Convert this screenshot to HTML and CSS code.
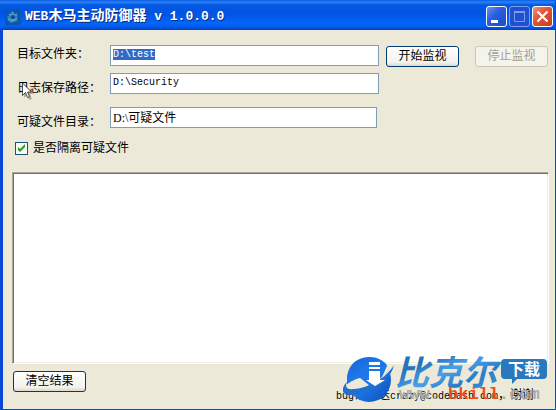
FILE: index.html
```
<!DOCTYPE html>
<html lang="zh-CN">
<head>
    <meta charset="UTF-8">
    <meta name="viewport" content="width=device-width, initial-scale=1.0">
    <title>WEB木马主动防御器</title>
    <link rel="stylesheet" href="styles.css">
</head>
<body>
    <div class="window">
        <header class="titlebar">
            <svg class="app-icon" viewBox="0 0 16 16">
                <rect width="16" height="16" fill="#0b55b5"/>
                <path d="M2 8l3-3 2-3 2 3 4 1-1 3 1 3-4 1-3 1-3-2z" fill="#2f7fbc"/>
                <path d="M4 5l4 2 4-2M3 10l5 2 4-3M8 3v9" stroke="#6cb0d0" fill="none"/>
                <circle cx="8" cy="8" r="2" fill="#0c4890"/>
            </svg>
            <h1 class="title"><span class="latin">WEB</span>木马主动防御器<span class="latin"> v 1.0.0.0</span></h1>
            <div class="window-buttons">
                <button type="button" class="win-btn" aria-label="最小化">
                    <svg viewBox="0 0 19 19"><path d="M4 13h7v3H4z" fill="#fff"/></svg>
                </button>
                <button type="button" class="win-btn win-max" aria-label="最大化" disabled>
                    <svg viewBox="0 0 19 19"><path d="M4.500 5v9.500h10V5M4 5h11" stroke="#7d9cf0" fill="none"/><path d="M4 4h11v2H4z" fill="#7d9cf0"/></svg>
                </button>
                <button type="button" class="win-btn win-close" aria-label="关闭">
                    <svg viewBox="0 0 19 19"><path d="M4.500 4.500l10 10m0-10l-10 10" stroke="#fff" stroke-width="2.200"/></svg>
                </button>
            </div>
        </header>

        <main class="content">
            <form class="settings">
                <div class="row">
                    <label for="target">目标文件夹：</label>
                    <input type="text" id="target" class="latin-input" value="D:\test" autofocus>
                    <div class="actions">
                        <button type="button" class="btn">开始监视</button>
                        <button type="button" class="btn" disabled>停止监视</button>
                    </div>
                </div>
                <div class="row row-log">
                    <label for="log">日志保存路径：</label>
                    <input type="text" id="log" class="latin-input" value="D:\Security">
                    <svg class="cursor" viewBox="0 0 12 19">
                        <path d="M2 3v13l3-3 2 5 3-1-2-5h4z" fill="#000" opacity=".25"/>
                        <path d="M.5 1v12.500l3-3 2 5 2-1-2-4.500h4z" fill="#fff" stroke="#222" stroke-width=".8"/>
                    </svg>
                </div>
                <div class="row row-suspect">
                    <label for="suspect">可疑文件目录：</label>
                    <input type="text" id="suspect" value="D:\可疑文件">
                </div>
                <label class="check"><input type="checkbox" checked>是否隔离可疑文件</label>
            </form>

            <div class="results"></div>

            <footer class="footer">
                <button type="button" class="btn btn-clear">清空结果</button>
                <p class="contact"><span class="latin">bug</span>请发送<span class="latin">crazy@codebash.com</span>，谢谢</p>
            </footer>
        </main>

        <svg class="watermark" viewBox="0 0 212 56">
            <defs>
                <linearGradient id="ball" x1="0" y1="0" x2="1" y2="1">
                    <stop offset="0" stop-color="#1263d8"/>
                    <stop offset=".5" stop-color="#1f78ea"/>
                    <stop offset="1" stop-color="#0b4db4"/>
                </linearGradient>
                <linearGradient id="word" x1="0" y1="0" x2="1" y2="1">
                    <stop offset="0" stop-color="#2474bd"/>
                    <stop offset=".3" stop-color="#2474bd"/>
                    <stop offset=".5" stop-color="#4aa0e8"/>
                    <stop offset=".7" stop-color="#2b7cc8"/>
                    <stop offset="1" stop-color="#4a9ad8"/>
                </linearGradient>
            </defs>
            <circle cx="26" cy="27" r="22" fill="url(#ball)"/>
            <path d="M4 31C14 23 28 24 34 20l11-8 3 6C40 32 24 41 5 39z" fill="#ece9d8"/>
            <path d="M4 24C6 10 15 4 27 4c7 0 13 3 17 8-4 7-12 6-20 9C16 24 9 27 4 31z" fill="url(#ball)"/>
            <path d="M16 24l8-3 17-9 3 1-5 11-12 9z" fill="#1f78ea"/>
            <path d="M5 28C-3 35-2 43 9 42c18-1 38-13 42-30C43 25 26 35 11 36c-8 1-10-3-6-8z" fill="#2170d0"/>
            <path d="M26 9h11v3H26zm0 5h11v2H26zm0 4h11v9h5L32 33l-9-6h3z" fill="#fff"/>
            <text class="brand" x="52" y="32">比克尔</text>
            <path d="M162 6h38q4 0 4 4v12q0 4-4 4h-26l-5 5v-5h-7q-4 0-4-4V10q0-4 4-4z" fill="#2879bd"/>
            <text class="brand-badge" x="165" y="22">下载</text>
            <text class="brand-url" y="46"><tspan x="56">www.</tspan><tspan class="brand-hot" x="105">bkill</tspan><tspan x="156">.com</tspan></text>
        </svg>
    </div>

    <script>
        const target = document.getElementById("target");
        target.focus();
        target.select();
    </script>
</body>
</html>
```

FILE: styles.css
```
* {
    box-sizing: border-box;
}
body {
    margin: 0;
    font-family: "Liberation Serif", "Noto Sans CJK SC", serif;
    font-size: 12px;
    line-height: 16px;
    color: #000;
    background-color: #ece9d8;
}
button, input {
    font: inherit;
    margin: 0;
}
.window {
    position: relative;
    display: flex;
    flex-direction: column;
    min-height: 100vh;
    border: solid #0a48d8;
    border-width: 0 1px 1px 3px;
}
.latin {
    font-family: "Liberation Mono", monospace;
    font-size: 10px;
    white-space: pre;
}

/* 标题栏 */
.titlebar {
    display: flex;
    align-items: center;
    height: 30px;
    margin-left: -3px;
    padding: 3px 2px 0 5px;
    background: linear-gradient(#0a5ce0 0, #2a82fa 2px, #0458e0 5px, #0054e3 14px, #0566fb 24px, #0359ea 27px, #0340c4 30px);
}
.app-icon {
    width: 16px;
    height: 16px;
    margin-right: 4px;
}
.title {
    flex: 1;
    margin: 0;
    font-size: 14px;
    line-height: 20px;
    color: #fff;
    text-shadow: 1px 1px #0a2a80;
}
.title .latin {
    font-size: 13px;
}
.window-buttons {
    display: flex;
    gap: 2px;
}
.win-btn {
    width: 21px;
    height: 21px;
    padding: 0;
    border: 1px solid #fff;
    border-radius: 3px;
    background: linear-gradient(135deg, #6a94f0, #2a5fe0 40%, #1b4cc8);
}
.win-btn svg {
    display: block;
    width: 19px;
    height: 19px;
}
.win-max {
    border-color: #7d9cf0;
    background: #1f50d0;
}
.win-close {
    background: linear-gradient(135deg, #f09478, #e2553a 40%, #c83c18);
}

/* 设置区 */
.content {
    flex: 1;
    display: flex;
    flex-direction: column;
    padding: 15px 6px 15px 9px;
}
.settings {
    padding-left: 5px;
}
.row {
    position: relative;
    display: grid;
    grid-template-columns: 93px 269px 1fr;
    align-items: start;
    margin-bottom: 6px;
}
.row label {
    padding-top: 1px;
}
.row-log {
    margin-bottom: 11px;
}
.row-log label, .row-suspect label {
    padding-top: 7px;
}
.row-suspect {
    grid-template-columns: 93px 267px 1fr;
    margin-bottom: 10px;
}
input[type="text"] {
    width: 100%;
    height: 21px;
    padding: 0 2px 2px;
    border: 1px solid #7f9db9;
    border-radius: 0;
    outline: none;
    background-color: #fff;
}
input.latin-input {
    font-family: "Liberation Mono", monospace;
    font-size: 10px;
}
input::selection {
    color: #fff;
    background-color: #316ac5;
}
.actions {
    display: flex;
    gap: 16px;
    padding: 1px 0 0 7px;
}
.btn {
    width: 73px;
    height: 21px;
    padding: 0;
    line-height: 17px;
    color: #000;
    border: 1px solid #003c74;
    border-radius: 3px;
    background: linear-gradient(#fff, #f3f2ec 80%, #dcd8cc);
}
.btn:disabled {
    color: #a1a192;
    border-color: #c9c7ba;
    background: #f5f4ea;
}
.cursor {
    position: absolute;
    top: 9px;
    left: 5px;
    width: 12px;
    height: 19px;
}
.check {
    display: flex;
    align-items: center;
    gap: 5px;
    margin-left: -2px;
}
.check input {
    appearance: none;
    width: 13px;
    height: 13px;
    border: 1px solid #1c5180;
    background: #f8f8f4;
}
.check input:checked {
    background: #f8f8f4 url('data:image/svg+xml,<svg xmlns="http://www.w3.org/2000/svg" viewBox="0 0 11 11"><path d="M2 4v3l2 2 5-5V1L4 6z" fill="%2321a121"/></svg>');
}

/* 结果列表 */
.results {
    flex: 1;
    min-height: 60px;
    margin-top: 16px;
    border: 1px solid;
    border-color: #aca899 #fff #fff #aca899;
    box-shadow: inset 1px 1px #716f64, inset -1px -1px #f1efe2;
    background-color: #fff;
}
.footer {
    display: flex;
    justify-content: space-between;
    padding: 7px 15px 0 1px;
}
.contact {
    margin: 16px 0 -11px;
}

/* 下载站标志 */
.watermark {
    position: absolute;
    right: 0;
    bottom: 0;
    width: 212px;
    height: 56px;
}
.brand {
    font: italic bold 34px "Noto Sans CJK SC", sans-serif;
    fill: url(#word);
}
.brand-badge {
    font: bold 16px "Noto Sans CJK SC", sans-serif;
    fill: #fff;
}
.brand-url {
    font: bold 17px "Liberation Mono", monospace;
    fill: #a9a9a5;
}
.brand-hot {
    fill: #ee4b1c;
}
```
